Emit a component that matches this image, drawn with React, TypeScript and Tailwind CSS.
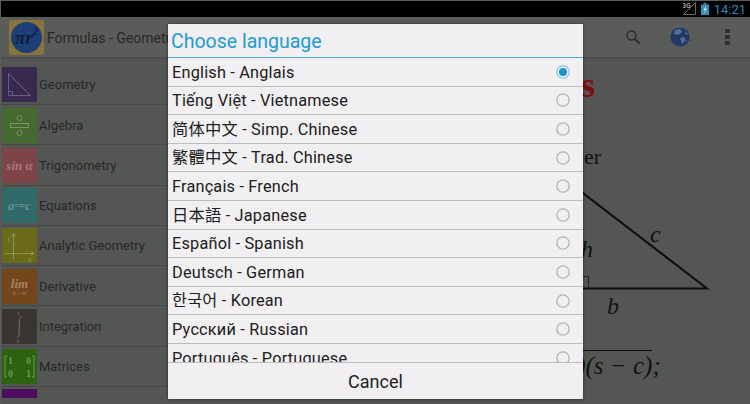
import React from "react";

const sansClass = "font-['Roboto','Noto_Sans_CJK_SC',sans-serif]";

function TileText({ children }: { children: React.ReactNode }) {
  return <span className="font-['Liberation_Serif',serif] italic font-bold text-[#a57a7c] text-[13px] leading-none">{children}</span>;
}

const tiles: { name: string; bg: string; icon: React.ReactNode }[] = [
  {
    name: "Geometry",
    bg: "bg-[#372a4e]",
    icon: (
      <svg width="35" height="35" viewBox="0 0 35 35" fill="none" stroke="#6a5f80" strokeWidth="1">
        <path d="M6.5 6.5 L6.5 28.5 L28.5 28.5 Z" />
        <path d="M6.5 24.5 H10.5 V28.5" />
      </svg>
    ),
  },
  {
    name: "Algebra",
    bg: "bg-[#456a2e]",
    icon: (
      <svg width="35" height="35" viewBox="0 0 35 35" fill="none" stroke="#7a9464" strokeWidth="1">
        <circle cx="17.5" cy="10" r="2.5" />
        <rect x="8.5" y="15.5" width="18" height="4" />
        <circle cx="17.5" cy="25" r="2.5" />
      </svg>
    ),
  },
  {
    name: "Trigonometry",
    bg: "bg-[#7e4548]",
    icon: <TileText>sin α</TileText>,
  },
  {
    name: "Equations",
    bg: "bg-[#2f6a68]",
    icon: (
      <span className="font-['Liberation_Serif',serif] italic font-bold text-[#659290] text-[13px] leading-none">
        a<sup className="text-[7px]">x</sup>=c
      </span>
    ),
  },
  {
    name: "Analytic Geometry",
    bg: "bg-[#6b6a18]",
    icon: (
      <svg width="35" height="35" viewBox="0 0 35 35" fill="none" stroke="#929152" strokeWidth="1">
        <path d="M11.5 31 V6 M9.5 9 L11.5 5.5 L13.5 9" />
        <path d="M3 25.5 H32 M29 23.5 L32 25.5 L29 27.5" />
        <text x="5" y="13" fontSize="8" fontStyle="italic" fontFamily="Liberation Serif, serif" fill="#929152" stroke="none">y</text>
        <text x="26" y="34" fontSize="8" fontStyle="italic" fontFamily="Liberation Serif, serif" fill="#929152" stroke="none">x</text>
      </svg>
    ),
  },
  {
    name: "Derivative",
    bg: "bg-[#74461c]",
    icon: (
      <span className="flex flex-col items-center font-['Liberation_Serif',serif] italic text-[#a5855e] leading-none">
        <span className="text-[13px] font-bold">lim</span>
        <span className="text-[6px] font-bold">x→∞</span>
      </span>
    ),
  },
  {
    name: "Integration",
    bg: "bg-[#383533]",
    icon: (
      <svg width="35" height="35" viewBox="0 0 35 35" fill="none" stroke="#72706e" strokeWidth="1">
        <path d="M20 8 C18 7 17.6 9 17.5 12 L17 25 C17 28 16 29 14.5 28" />
        <text x="15" y="6" fontSize="6" fontStyle="italic" fontFamily="Liberation Serif, serif" fill="#72706e" stroke="none">x</text>
        <text x="13" y="34" fontSize="6" fontStyle="italic" fontFamily="Liberation Serif, serif" fill="#72706e" stroke="none">-x</text>
      </svg>
    ),
  },
  {
    name: "Matrices",
    bg: "bg-[#2c6210]",
    icon: (
      <svg width="35" height="35" viewBox="0 0 35 35" fill="none" stroke="#6c9458" strokeWidth="1">
        <path d="M5 7 H3 V28 H5 M30 7 H32 V28 H30" />
        <g fontSize="10" fontWeight="bold" fontFamily="Liberation Serif, serif" fill="#6c9458" stroke="none">
          <text x="6" y="15">1</text>
          <text x="24" y="15">0</text>
          <text x="6" y="28">0</text>
          <text x="24" y="28">1</text>
        </g>
      </svg>
    ),
  },
  { name: "", bg: "bg-[#4e0e5e]", icon: null },
];

const languages = [
  "English - Anglais",
  "Tiếng Việt - Vietnamese",
  "简体中文 - Simp. Chinese",
  "繁體中文 - Trad. Chinese",
  "Français - French",
  "日本語 - Japanese",
  "Español - Spanish",
  "Deutsch - German",
  "한국어 - Korean",
  "Русский - Russian",
  "Português - Portuguese",
];

function Radio({ on }: { on?: boolean }) {
  return (
    <svg width="16" height="16" viewBox="0 0 16 16" className="shrink-0">
      <circle cx="8" cy="8" r="6.2" fill="none" stroke={on ? "#8fc7de" : "#b4b4b4"} strokeWidth="1.3" />
      {on && <circle cx="8" cy="8" r="4" fill="#1f96c8" />}
    </svg>
  );
}

export default function App() {
  return (
    <div className={`relative w-[750px] h-[404px] overflow-hidden bg-[#545653] border-t border-l border-[#5c5c5c] flex flex-col ${sansClass}`}>
      {/* status bar */}
      <div className="h-[16px] shrink-0 bg-black flex items-center justify-end pr-[4px]">
        <svg width="14" height="14" viewBox="0 0 14 14" className="mr-[4px]">
          <path d="M12.5 0.5 V12.5 H0.5 Z" fill="none" stroke="#6a6a6a" strokeWidth="1" />
          <text x="-1" y="6" fontSize="7" fontWeight="bold" fontFamily="Roboto, sans-serif" fill="#999">3G</text>
        </svg>
        <svg width="8" height="12" viewBox="0 0 8 12" className="mr-[5px]">
          <rect x="2.5" y="0" width="3" height="1.5" fill="#3a8fb8" />
          <rect x="0" y="1.5" width="8" height="10.5" fill="#3a8fb8" />
          <path d="M4.8 2.5 L2.5 7 H4 L3.2 10.5 L5.8 5.8 H4.2 Z" fill="#dfeef5" />
        </svg>
        <span className="text-[13px] leading-none text-[#2f88b3]">14:21</span>
      </div>

      {/* action bar */}
      <div className="h-[42px] shrink-0 bg-[#5a5c59] border-b-2 border-[#4c4e4b] flex items-center">
        <div className="ml-[8px] w-[35px] h-[35px] rounded-[3px] bg-[#86743a] flex items-center justify-center">
          <div className="w-[31px] h-[31px] rounded-full bg-[#1c3f78] flex items-center justify-center text-[#0d1c38] font-['Liberation_Serif',serif] italic font-bold text-[19px] leading-none">
            πr<sup className="text-[10px]">2</sup>
          </div>
        </div>
        <span className="ml-[3px] pt-[2px] text-[14px] text-[#262826] whitespace-nowrap">Formulas - Geometry</span>
        <div className="flex-1" />
        <svg width="16" height="16" viewBox="0 0 16 16" className="mr-[28px]" fill="none" stroke="#2c2e2c">
          <circle cx="6.5" cy="6.5" r="4.5" strokeWidth="1.4" />
          <path d="M10 10 L14.5 14.5" strokeWidth="2.2" />
        </svg>
        <svg width="24" height="20" viewBox="0 0 24 20" className="mr-[32px]">
          <circle cx="11" cy="10" r="9.5" fill="#1f3a68" />
          <path d="M6 3 L11 2 L13 5 L9 8 L5 7 Z M11 11 L15 10 L17 14 L13 17 Z M16 4 L19 7 L17 8 Z" fill="#5a6f90" />
          <path d="M14 15 L23 13" stroke="#2c4a78" strokeWidth="1" />
        </svg>
        <div className="flex flex-col gap-[2px] mr-[20px]">
          <div className="w-[5px] h-[4px] bg-[#2f312f]" />
          <div className="w-[5px] h-[4px] bg-[#2f312f]" />
          <div className="w-[5px] h-[4px] bg-[#2f312f]" />
        </div>
      </div>

      {/* body */}
      <div className="flex h-[339px] shrink-0">
        <div className="w-[249px] shrink-0 h-[339px] overflow-hidden border-r border-[#4e504d] pl-[1px] pt-[5px]">
          {tiles.map((t) => (
            <div key={t.name || "more"} className="h-[40.25px] flex items-start gap-[2px] border-b border-[#464845] box-border pt-[2.5px] first:h-[38px] first:pt-0 first:mt-[3px]">
              <div className={`w-[35px] h-[35px] shrink-0 flex items-center justify-center ${t.bg}`}>{t.icon}</div>
              <span className="text-[13px] leading-[36px] text-[#262826] whitespace-nowrap">{t.name}</span>
            </div>
          ))}
        </div>
        <div className="flex-1 min-w-0 flex flex-col font-['Liberation_Serif',serif] text-[#111]">
          <div className="h-[52px] text-right pr-[155px] pt-[4px] text-[36px] leading-[44px] font-bold text-[#7f0d0e]">Triangles</div>
          <div className="h-[42px] mt-[31px] text-right pr-[149px] text-[22px] leading-[30px] text-[#111]">Perimeter</div>
          <svg width="500" height="150" viewBox="250 185 500 150" className="shrink-0 mt-[1px] block" fill="none">
            <path d="M520 144.7 L707 288.5 H400" stroke="#0c0c0c" strokeWidth="2" />
            <path d="M582 276.5 H588.5 V288" stroke="#222" strokeWidth="1" />
            <g fontFamily="Liberation Serif, serif" fontStyle="italic" fontSize="24" fill="#111">
              <text x="581" y="257">h</text>
              <text x="650" y="242">c</text>
              <text x="607" y="314">b</text>
            </g>
          </svg>
          <div className="pl-[181px] mt-[16px] text-[25px] leading-[30px] italic text-[#111] whitespace-nowrap">
            <span className="border-t border-[#111] pt-[1px]">p(p − a)(p − b)(s − c)</span>;
          </div>
        </div>
      </div>

      {/* dialog */}
      <div className="absolute left-[167px] top-[23px] w-[415px] h-[375px] bg-[#f1eff2] flex flex-col shadow-[0_0_3px_rgba(0,0,0,0.5)]">
        <div className="h-[34px] shrink-0 border-b-[1.5px] border-[#4cb0d8] pl-[3px] text-[19.5px] leading-[36px] text-[#1d9bd4]">
          Choose language
        </div>
        <div className="h-[304px] overflow-hidden shrink-0">
          {languages.map((l, i) => (
            <div key={l} className="h-[28.6px] box-border border-b border-[#bdbcbe] flex items-center pl-[4px] pr-[12px]">
              <span className="flex-1 pt-[2px] text-[16.3px] tracking-[0.2px] text-[#202020] whitespace-nowrap">{l}</span>
              <Radio on={i === 0} />
            </div>
          ))}
        </div>
        <div className="flex-1 border-t border-[#bdbcbe] flex items-center justify-center text-[18px] text-[#1e1e1e]">Cancel</div>
      </div>
    </div>
  );
}
